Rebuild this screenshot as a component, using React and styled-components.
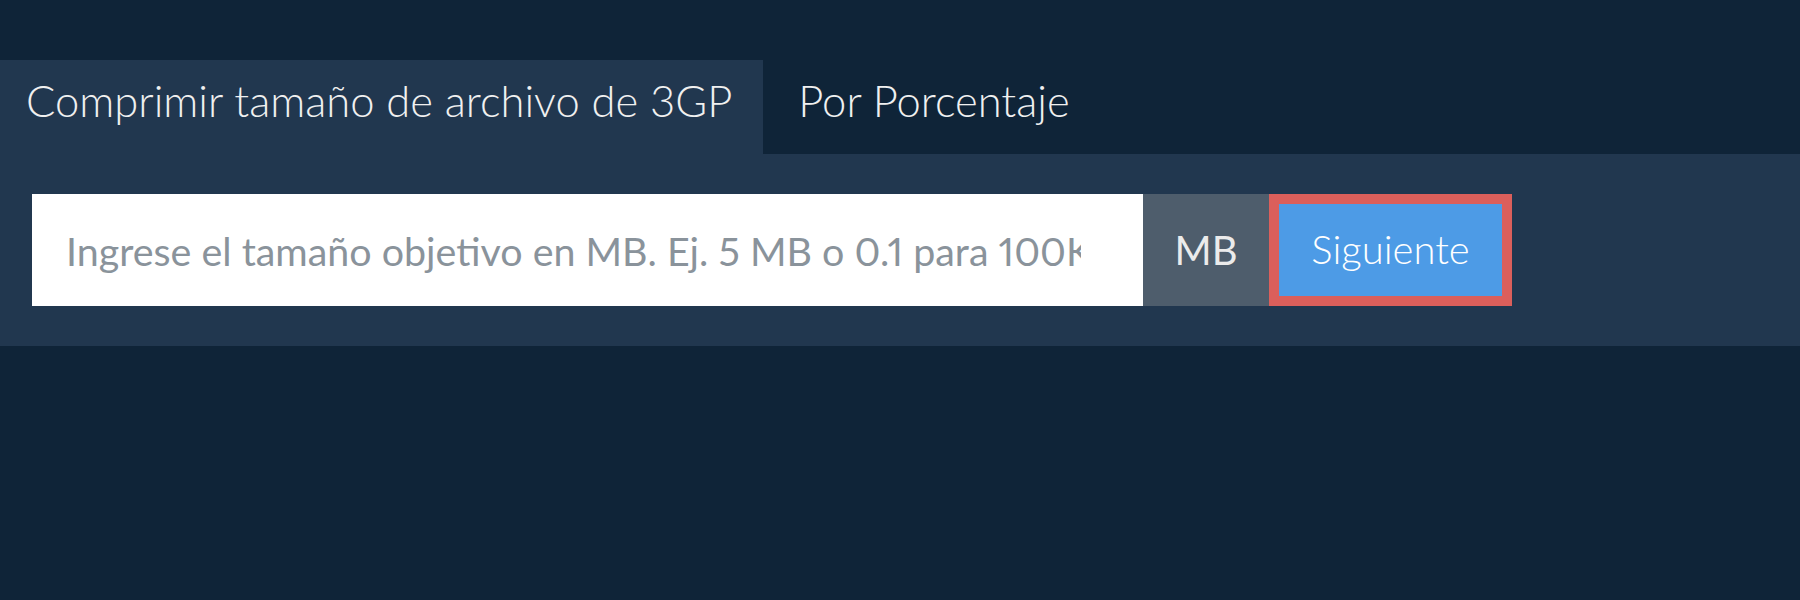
import React from "react";
import styled, { createGlobalStyle } from "styled-components";

const Global = createGlobalStyle`
  html, body { margin: 0; padding: 0; background: #0f2438; }
  body { font-family: Lato, "Open Sans", sans-serif; }
`;

const Page = styled.div`
  width: 1800px;
  height: 600px;
  background: #0f2438;
  padding-top: 60px;
  box-sizing: border-box;
`;

const Tabs = styled.nav`
  display: flex;
  align-items: stretch;
`;

const Tab = styled.div`
  box-sizing: border-box;
  height: 94px;
  padding: 14px ${(p) => (p.$active ? "31px" : "36px")} 0 ${(p) => (p.$active ? "26px" : "35px")};
  line-height: 52px;
  background: ${(p) => (p.$active ? "#21374f" : "transparent")};
  color: #f0f0f0;
  font-family: Lato, sans-serif;
  font-size: 43.5px;
  font-weight: 300;
  white-space: nowrap;
`;

const Panel = styled.section`
  background: #21374f;
  padding: 40px 32px;
  display: flex;
`;

const InputGroup = styled.div`
  display: flex;
  height: 112px;
`;

const SizeInput = styled.input`
  width: 1111px;
  box-sizing: border-box;
  border: 0;
  border-radius: 0;
  outline: none;
  background: #ffffff;
  padding: 0 62px 0 34px;
  font-family: Lato, sans-serif;
  font-size: 39.4px;
  font-weight: 400;
  font-variant-numeric: proportional-nums;
  color: #333333;
  &::placeholder {
    color: #8a939b;
    opacity: 1;
  }
`;

const Unit = styled.div`
  width: 126px;
  background: #4e5d6c;
  color: #ebebeb;
  display: flex;
  align-items: center;
  justify-content: center;
  font-family: Lato, sans-serif;
  font-size: 40px;
  font-weight: 400;
`;

const NextButton = styled.button`
  box-sizing: border-box;
  width: 243px;
  border: 10px solid #db5f5b;
  border-radius: 0;
  background: #4d9be6;
  color: #ffffff;
  font-family: Lato, sans-serif;
  font-size: 40px;
  font-weight: 300;
  padding: 0 0 2px;
  cursor: pointer;
`;

export default function App() {
  return (
    <Page>
      <Global />
      <Tabs>
        <Tab $active>Comprimir tamaño de archivo de 3GP</Tab>
        <Tab>Por Porcentaje</Tab>
      </Tabs>
      <Panel>
        <InputGroup>
          <SizeInput placeholder="Ingrese el tamaño objetivo en MB. Ej. 5 MB o 0.1 para 100K" />
          <Unit>MB</Unit>
          <NextButton>Siguiente</NextButton>
        </InputGroup>
      </Panel>
    </Page>
  );
}
